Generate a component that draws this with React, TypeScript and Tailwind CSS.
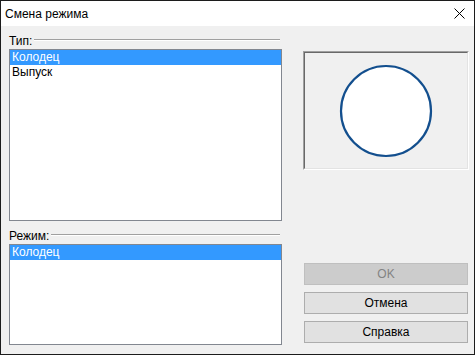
import React from "react";

const font = { fontFamily: '"Liberation Sans", Arial, sans-serif' };

function GroupLabel({ text }: { text: string }) {
  return (
    <div className="flex h-[14px] items-center">
      <span className="text-[12px] leading-[14px] text-black">{text}</span>
      <div className="mb-[2px] ml-[2px] mr-[2px] h-[2px] flex-1 border-t border-b border-t-[#a0a0a0] border-b-white" />
    </div>
  );
}

function Row({ text, selected }: { text: string; selected?: boolean }) {
  return (
    <div
      className={
        selected
          ? "h-[15px] bg-[#3399ff] pl-[2px] text-[12px] leading-[15px] text-white"
          : "h-[15px] pl-[2px] text-[12px] leading-[15px] text-black"
      }
    >
      {text}
    </div>
  );
}

export default function App() {
  return (
    <div
      className="flex h-[355px] w-[475px] flex-col border border-[#1c1c1c] bg-[#f0f0f0]"
      style={font}
    >
      <div className="flex h-[25px] items-center justify-between bg-white pl-[4px] pr-[9px]">
        <span className="text-[12px] leading-[16px] text-black">Смена режима</span>
        <svg width="11" height="11" viewBox="0 0 11 11">
          <path d="M0.5 0.5 L10.5 10.5 M10.5 0.5 L0.5 10.5" stroke="#000" strokeWidth="1" fill="none" />
        </svg>
      </div>
      <div className="flex flex-1 pl-[8px]">
        <div className="flex w-[273px] flex-col pt-[8px]">
          <GroupLabel text="Тип:" />
          <div className="mt-[1px] h-[172px] border border-[#828790] bg-white">
            <Row text="Колодец" selected />
            <Row text="Выпуск" />
          </div>
          <div className="mt-[8px]">
            <GroupLabel text="Режим:" />
          </div>
          <div className="mt-[1px] h-[101px] border border-[#828790] bg-white">
            <Row text="Колодец" selected />
          </div>
        </div>
        <div className="ml-[21px] flex w-[166px] flex-col pt-[25px]">
          <div className="h-[119px] w-[166px] border-t border-l border-b border-r border-t-[#a0a0a0] border-l-[#a0a0a0] border-b-white border-r-white">
            <div className="flex h-full w-full items-center justify-center border-t border-l border-b border-r border-t-[#696969] border-l-[#696969] border-b-[#e3e3e3] border-r-[#e3e3e3] bg-[#f0f0f0]">
              <svg width="96" height="96" viewBox="0 0 96 96">
                <circle cx="48" cy="48" r="45" fill="#fff" stroke="#134f8e" strokeWidth="2.2" />
              </svg>
            </div>
          </div>
          <div className="ml-[1px] mt-[93px] flex w-[164px] flex-col gap-[7px]">
            <button className="h-[22px] border border-[#bfbfbf] bg-[#cccccc] text-[12px] text-[#838383]">
              OK
            </button>
            <button className="h-[22px] border border-[#adadad] bg-[#e1e1e1] text-[12px] text-black">
              Отмена
            </button>
            <button className="h-[22px] border border-[#adadad] bg-[#e1e1e1] text-[12px] text-black">
              Справка
            </button>
          </div>
        </div>
      </div>
    </div>
  );
}
